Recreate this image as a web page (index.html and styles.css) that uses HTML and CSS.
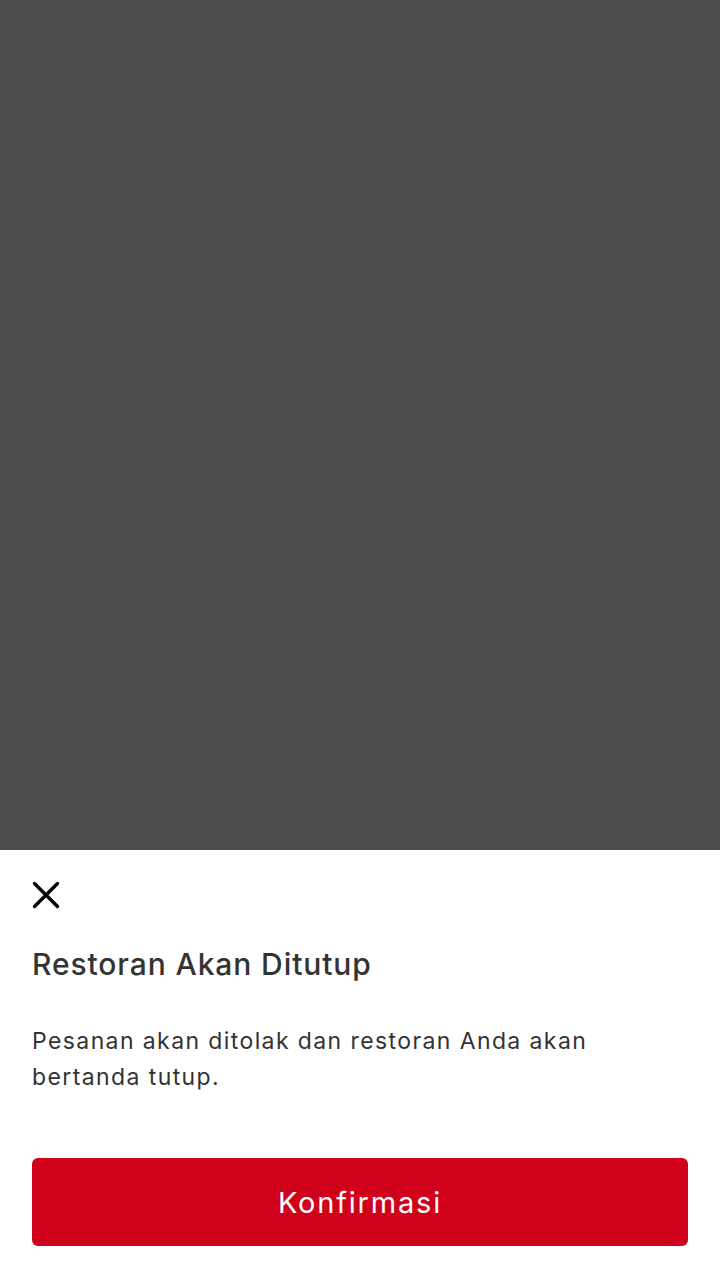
FILE: index.html
```html
<!DOCTYPE html>
<html lang="id">
<head>
<meta charset="utf-8">
<link rel="stylesheet" href="styles.css">
</head>
<body>
<div class="screen">
  <div class="overlay"></div>
  <div class="sheet">
    <button class="close" aria-label="Tutup">
      <svg width="28" height="28" viewBox="0 0 28 28"><path d="M2.5 2.5 L25.5 25.5 M25.5 2.5 L2.5 25.5" stroke="#000" stroke-width="3.4" stroke-linecap="round" fill="none"/></svg>
    </button>
    <h1 class="title">Restoran Akan Ditutup</h1>
    <p class="desc">Pesanan akan ditolak dan restoran Anda akan bertanda tutup.</p>
    <button class="confirm">Konfirmasi</button>
  </div>
</div>
</body>
</html>
```
FILE: styles.css
```css
* { box-sizing: border-box; }
html, body { margin: 0; padding: 0; }
body { font-family: Inter, "Noto Sans", sans-serif; background: #fff; }
.screen { width: 720px; height: 1280px; display: flex; flex-direction: column; }
.overlay { flex: 1; background: #4d4d4d; }
.sheet { height: 430px; background: #fff; padding: 31px 32px 0; display: flex; flex-direction: column; }
.close { width: 28px; height: 28px; padding: 0; border: 0; background: none; display: block; }
.close svg { display: block; }
.title { margin: 35px 0 0; font-size: 30px; line-height: 40px; font-weight: 500; color: #333; letter-spacing: 0.9px; }
.desc { margin: 39px 0 0; font-size: 23px; line-height: 36px; color: #333; font-weight: 400; letter-spacing: 1.4px; }
.confirm { margin-top: 63px; height: 88px; width: 100%; border: 0; border-radius: 6px; background: #d0021b; color: #fff; font-family: inherit; font-size: 29px; font-weight: 400; letter-spacing: 1.8px; }
```
